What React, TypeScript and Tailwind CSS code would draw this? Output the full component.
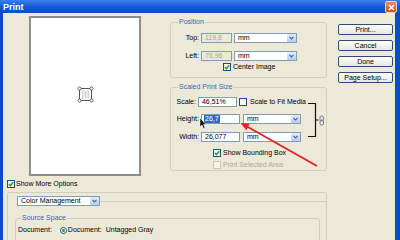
import React from 'react';

const F = "font-['Liberation_Sans',Arial,sans-serif]";

function Check({ checked = false, disabled = false }: { checked?: boolean; disabled?: boolean }) {
  return (
    <span
      className={`w-[8px] h-[8px] shrink-0 border flex items-center justify-center ${
        disabled ? 'border-[#cac8bb] bg-[#f4f3ee]' : 'border-[#1c5180] bg-[#f6f6f3]'
      }`}
    >
      {checked && (
        <svg width="6" height="6" viewBox="0 0 6 6">
          <path d="M0.8 3 L2.4 4.6 L5.3 1.2" fill="none" stroke="#21a121" strokeWidth="1.4" />
        </svg>
      )}
    </span>
  );
}

function Field({ value, w, disabled = false, selected = false }: { value: string; w: string; disabled?: boolean; selected?: boolean }) {
  return (
    <div
      className={`${w} h-[10px] shrink-0 border border-[#7f9db9] flex items-center pl-[2px] ${
        disabled ? 'bg-[#ece9d8] text-[#aca899]' : 'bg-white text-black'
      }`}
    >
      {selected ? <span className="bg-[#316ac5] text-white px-[1px]">{value}</span> : <span className="pl-[1px]">{value}</span>}
    </div>
  );
}

function Combo({ label, w }: { label: string; w: string }) {
  return (
    <div className={`${w} h-[10px] shrink-0 border border-[#7f9db9] bg-white flex items-center justify-between`}>
      <span className="pl-[3px]">{label}</span>
      <span className="w-[9px] h-[8px] mr-[0.5px] rounded-[1px] bg-linear-to-b from-[#e3ecfd] to-[#b6cbf5] flex items-center justify-center">
        <svg width="5" height="4" viewBox="0 0 5 4">
          <path d="M0.5 0.8 L2.5 2.8 L4.5 0.8" fill="none" stroke="#4d6185" strokeWidth="1.2" />
        </svg>
      </span>
    </div>
  );
}

function Btn({ label }: { label: string }) {
  return (
    <div className="h-[11px] w-full border border-[#2c4d7a] rounded-[2px] bg-linear-to-b from-white to-[#e8e6dc] flex items-center justify-center">
      {label}
    </div>
  );
}

function Legend({ text, ml }: { text: string; ml: string }) {
  return <legend className={`${ml} px-[1px] text-[#3d63b5] leading-[8px]`}>{text}</legend>;
}

export default function App() {
  return (
    <div className={`relative w-[400px] h-[240px] overflow-hidden bg-[#ece9d8] flex flex-col text-[7px] leading-[8px] text-black ${F}`}>
      {/* title bar */}
      <div className="h-[13px] shrink-0 flex items-center justify-between pl-[3px] pr-[3px] bg-linear-to-b from-[#3d80ea] via-[#0e5ad8] to-[#0a4bc8]">
        <span className="text-white font-bold text-[9px] leading-[10px]">Print</span>
        <div className="w-[12px] h-[12px] mt-[1px] rounded-[2px] border border-[#f3d3c8] bg-linear-to-b from-[#ee8a68] to-[#d8441c] flex items-center justify-center">
          <svg width="7" height="7" viewBox="0 0 7 7">
            <path d="M1 1 L6 6 M6 1 L1 6" stroke="white" strokeWidth="1.6" />
          </svg>
        </div>
      </div>

      <div className="flex-1 flex flex-col border-l-[3px] border-r-[5px] border-[#0a4bc8]">
        <div className="h-[163px] shrink-0 flex items-start">
          {/* preview */}
          <div className="ml-[26px] mt-[3px] w-[112px] h-[160px] bg-white border-2 border-[#8e8d88] flex justify-center pt-[68px]">
            <svg width="17" height="17" viewBox="0 0 17 17">
              <rect x="2.5" y="2.5" width="12" height="12" fill="white" stroke="#555" strokeWidth="1" />
              <path d="M5.5 4 V13 M7 4 V13 M8.5 5 V12 M10 4 V13 M11.5 5 V12" stroke="#c8c8c8" strokeWidth="0.8" />
              {[
                [2.5, 2.5],
                [14.5, 2.5],
                [2.5, 14.5],
                [14.5, 14.5],
              ].map(([cx, cy], i) => (
                <circle key={i} cx={cx} cy={cy} r="1.6" fill="white" stroke="#444" strokeWidth="0.8" />
              ))}
            </svg>
          </div>

          {/* settings */}
          <div className="ml-[29px] mt-[5px] w-[157px] flex flex-col gap-[5px]">
            <fieldset className="border border-[#d0d0bf] rounded-[3px] pt-[7px] pb-[6px]">
              <Legend text="Position" ml="ml-[7px]" />
              <div className="flex items-center">
                <span className="w-[28px] text-right">Top:</span>
                <div className="ml-[2px]"><Field value="119,8" w="w-[31px]" disabled /></div>
                <div className="ml-[2px]"><Combo label="mm" w="w-[63px]" /></div>
              </div>
              <div className="flex items-center mt-[8px]">
                <span className="w-[28px] text-right">Left:</span>
                <div className="ml-[2px]"><Field value="76,96" w="w-[31px]" disabled /></div>
                <div className="ml-[2px]"><Combo label="mm" w="w-[63px]" /></div>
              </div>
              <div className="flex items-center mt-[2px] pl-[52px] h-[8px]">
                <Check checked />
                <span className="ml-[2px]">Center Image</span>
              </div>
            </fieldset>

            <fieldset className="border border-[#d0d0bf] rounded-[3px] pt-[6px] pb-[1px]">
              <Legend text="Scaled Print Size" ml="ml-[7px]" />
              <div className="flex">
                <div className="w-[135px]">
                  <div className="flex items-center whitespace-nowrap">
                    <span className="w-[28px] text-right">Scale:</span>
                    <div className="ml-[2px]"><Field value="46,51%" w="w-[39px]" /></div>
                    <div className="ml-[2px]"><Check /></div>
                    <span className="ml-[3px]">Scale to Fit Media</span>
                  </div>
                  <div className="flex items-center mt-[7px]">
                    <span className="w-[28px] text-right">Height:</span>
                    <div className="ml-[2px]"><Field value="26,7" w="w-[39px]" selected /></div>
                    <div className="ml-[3px]"><Combo label="mm" w="w-[58px]" /></div>
                  </div>
                  <div className="flex items-center mt-[8px]">
                    <span className="w-[28px] text-right">Width:</span>
                    <div className="ml-[2px]"><Field value="26,077" w="w-[39px]" /></div>
                    <div className="ml-[3px]"><Combo label="mm" w="w-[58px]" /></div>
                  </div>
                </div>
                <svg width="20" height="45" viewBox="0 0 20 45" className="shrink-0">
                  <path d="M2 6.5 H9.5 V39.5 H2 M9.5 23 H12.5" fill="none" stroke="#111" strokeWidth="1.2" />
                  <rect x="14" y="19" width="3.5" height="5" rx="1.5" fill="none" stroke="#777" strokeWidth="1" />
                  <rect x="14" y="23" width="3.5" height="5" rx="1.5" fill="none" stroke="#777" strokeWidth="1" />
                </svg>
              </div>
              <div className="flex items-center mt-[7px] pl-[42px] h-[8px]">
                <Check checked />
                <span className="ml-[2px]">Show Bounding Box</span>
              </div>
              <div className="flex items-center mt-[4px] pl-[42px] h-[8px] text-[#aca899]">
                <Check disabled />
                <span className="ml-[2px]">Print Selected Area</span>
              </div>
            </fieldset>
          </div>

          {/* buttons */}
          <div className="ml-[11px] mt-[11px] w-[55px] flex flex-col gap-[5px]">
            <Btn label="Print..." />
            <Btn label="Cancel" />
            <Btn label="Done" />
            <Btn label="Page Setup..." />
          </div>
        </div>

        <div className="flex items-center mt-[4px] ml-[4px] h-[8px]">
          <Check checked />
          <span className="ml-[1px]">Show More Options</span>
        </div>

        <div className="mt-[4px] ml-[4px] w-[320px] flex-1 border-t border-l border-r border-[#d0d0bf] rounded-t-[3px] pt-[3px]">
          <div className="flex items-center">
            <div className="ml-[9px]"><Combo label="Color Management" w="w-[83px]" /></div>
            <div className="flex-1 h-px bg-[#d0d0bf]" />
          </div>
          <fieldset className="ml-[7px] mr-[6px] mt-[8px] border border-[#d0d0bf] rounded-[3px] pt-[4px] pb-[10px]">
            <Legend text="Source Space" ml="ml-[5px]" />
            <div className="flex items-center h-[8px] pl-[2px] whitespace-nowrap">
              <span>Document:</span>
              <span className="ml-[8px] w-[7px] h-[7px] rounded-full border border-[#1c5180] bg-white flex items-center justify-center">
                <span className="w-[3px] h-[3px] rounded-full bg-[#21a121]" />
              </span>
              <span className="ml-[1px]">Document:</span>
              <span className="ml-[4px]">Untagged Gray</span>
            </div>
          </fieldset>
        </div>
      </div>

      {/* annotation arrow and cursor */}
      <svg className="absolute inset-0 pointer-events-none" width="400" height="240" viewBox="0 0 400 240">
        <line x1="317" y1="166" x2="247" y2="126.5" stroke="#e02525" strokeWidth="2" />
        <polygon points="240.5,123 249.7,123.6 246.3,130.2" fill="#e02525" />
        <path d="M200 118 V127 L202 125 L203.5 128.5 L205 128 L203.5 124.5 L206 124.5 Z" fill="#111" stroke="white" strokeWidth="0.5" />
      </svg>
    </div>
  );
}
